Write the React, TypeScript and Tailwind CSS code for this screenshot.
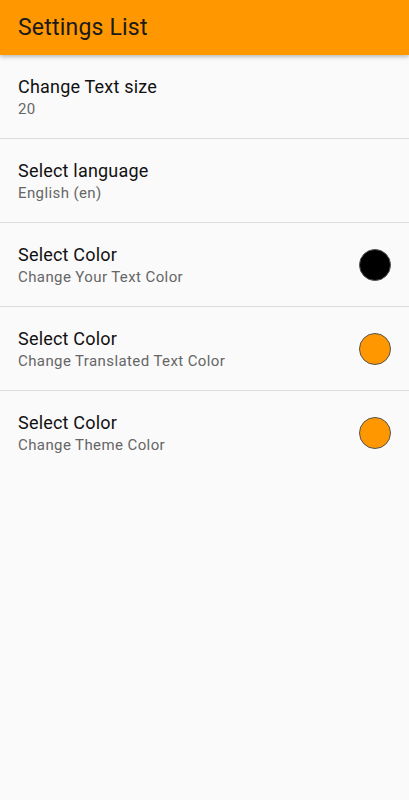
const rows = [
  { title: "Change Text size", sub: "20" },
  { title: "Select language", sub: "English (en)" },
  { title: "Select Color", sub: "Change Your Text Color", color: "bg-black" },
  { title: "Select Color", sub: "Change Translated Text Color", color: "bg-[#ff9800]" },
  { title: "Select Color", sub: "Change Theme Color", color: "bg-[#ff9800]" },
];

export default function App() {
  return (
    <div className="w-[409px] h-[800px] bg-[#fafafa] font-['Roboto',sans-serif]">
      {/* toolbar */}
      <div className="h-[55px] bg-[#ff9800] flex items-center px-[18px] shadow-[0_2px_4px_rgba(0,0,0,0.25)] relative">
        <h1 className="text-[23px] tracking-[0.2px] text-[#1a1a1a] leading-none">Settings List</h1>
      </div>

      {/* list */}
      <div>
        {rows.map((r, i) => (
          <div
            key={i}
            className={
              "h-[84px] flex items-center justify-between px-[18px] " +
              (i < rows.length - 1 ? "border-b border-[#dcdcdc]" : "")
            }
          >
            <div className="flex flex-col pt-[2px]">
              <span className="text-[18px] leading-[22px] tracking-[0.2px] text-[#111]">{r.title}</span>
              <span className="text-[15px] leading-[22px] tracking-[0.4px] text-[#666]">{r.sub}</span>
            </div>
            {r.color && (
              <div className={"w-8 h-8 rounded-full border border-[#555] " + r.color} />
            )}
          </div>
        ))}
      </div>
    </div>
  );
}
